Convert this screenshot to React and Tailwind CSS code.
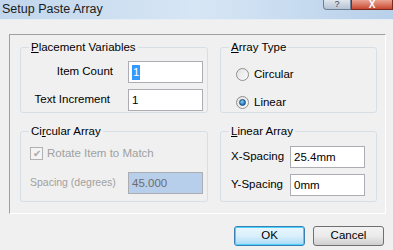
import React from "react";

const font = { fontFamily: '"Liberation Sans", Arial, sans-serif' };

function GroupBox({ label, accel, rest, className, children }) {
  return (
    <div className={`relative rounded-[3px] border border-[#d5dfe5] ${className}`}>
      <div className="absolute -top-[8px] left-[8px] bg-[#f0f0f0] px-[2px] text-[11.5px] leading-[15px] text-black">
        {label}
        <span className="underline">{accel}</span>
        {rest}
      </div>
      {children}
    </div>
  );
}

function TextBox({ value, selected, disabled }) {
  return (
    <div
      className={`flex h-[22px] w-[75px] items-center border border-[#abadb3] px-[3px] text-[11.5px] ${
        disabled ? "bg-[#b7cfea] text-[#6d6d6d]" : "bg-white text-black"
      }`}
    >
      {selected ? (
        <span className="bg-[#3399ff] px-[1px] leading-[15px] text-white">{value}</span>
      ) : (
        <span className="leading-[15px]">{value}</span>
      )}
    </div>
  );
}

function Radio({ checked, label }) {
  return (
    <div className="flex h-[14px] items-center gap-[5px] text-[11.5px] leading-[14px]">
      <span className="flex h-[13px] w-[13px] items-center justify-center rounded-full border border-[#8e8f8f] bg-gradient-to-br from-[#e2e2e2] to-[#fbfbfb]">
        {checked && (
          <span className="h-[7px] w-[7px] rounded-full border border-[#1d4f79] bg-[radial-gradient(circle_at_40%_35%,#8ed0f5,#1a73b8_70%)]" />
        )}
      </span>
      {label}
    </div>
  );
}

export default function App() {
  return (
    <div className="flex h-[250px] w-[393px] flex-col overflow-hidden bg-[#f0f0f0]" style={font}>
      {/* Title bar */}
      <div className="flex h-[19px] items-start justify-between bg-gradient-to-r from-[#c1d6ec] via-[#d7e6f5] to-[#b8d0ea]">
        <span className="pl-[2px] pt-[2px] text-[12.5px] leading-[15px] text-[#1b1b1b]">Setup Paste Array</span>
        <div className="flex">
          <div className="flex h-[10px] w-[28px] items-end justify-center rounded-bl-[4px] border border-t-0 border-[#6d7f95] bg-gradient-to-b from-[#dfe6ee] to-[#b6c3d3] text-[9px] leading-[9px] text-[#3e4a5a]">
            ?
          </div>
          <div className="flex h-[10px] w-[42px] items-end justify-center border border-t-0 border-[#7a2a20] bg-gradient-to-b from-[#e8a493] to-[#c7452e] text-[10px] font-bold leading-[9px] text-white">
            X
          </div>
        </div>
      </div>
      <div className="h-[1px] bg-[#e4ecf4]" />

      {/* Main panel */}
      <div className="ml-[9px] mt-[14px] h-[180px] w-[377px] border border-[#a0a0a0] border-b-white border-r-white">
        <div className="grid grid-cols-[188px_157px] gap-x-[12px] gap-y-[18px] pl-[10px] pt-[12px]">
          <GroupBox accel="P" rest="lacement  Variables" className="h-[66px]">
            <div className="flex flex-col gap-[6px] pt-[13px]">
              <div className="flex items-center text-[11.5px]">
                <span className="w-[107px] pr-[15px] text-right">Item Count</span>
                <TextBox value="1" selected />
              </div>
              <div className="flex items-center text-[11.5px]">
                <span className="w-[107px] pr-[18px] text-right">Text Increment</span>
                <TextBox value="1" />
              </div>
            </div>
          </GroupBox>

          <GroupBox accel="A" rest="rray Type" className="h-[66px]">
            <div className="flex flex-col gap-[14px] pl-[15px] pt-[19px]">
              <Radio label="Circular" />
              <Radio label="Linear" checked />
            </div>
          </GroupBox>

          <GroupBox label="Ci" accel="r" rest="cular Array" className="h-[71px]">
            <div className="flex flex-col gap-[10px] pl-[9px] pt-[13px] text-[11.5px] text-[#a0a0a0]">
              <div className="flex items-center gap-[4px]">
                <span className="flex h-[13px] w-[13px] items-center justify-center border border-[#b1b1b1] bg-[#f4f4f4] text-[10px] leading-[10px] text-[#a9a9a9]">
                  ✔
                </span>
                Rotate Item to Match
              </div>
              <div className="flex items-center">
                <span className="w-[98px] whitespace-nowrap text-[10.5px]">Spacing (degrees)</span>
                <TextBox value="45.000" disabled />
              </div>
            </div>
          </GroupBox>

          <GroupBox accel="L" rest="inear Array" className="h-[71px]">
            <div className="flex flex-col gap-[6px] pl-[10px] pt-[14px] text-[11.5px]">
              <div className="flex items-center">
                <span className="w-[59px]">X-Spacing</span>
                <TextBox value="25.4mm" />
              </div>
              <div className="flex items-center">
                <span className="w-[59px]">Y-Spacing</span>
                <TextBox value="0mm" />
              </div>
            </div>
          </GroupBox>
        </div>
      </div>

      {/* Buttons */}
      <div className="mt-[12px] flex justify-end gap-[8px] pr-[9px]">
        <button className="h-[20px] w-[71px] rounded-[3px] border border-[#3c7fb1] bg-gradient-to-b from-[#eaf6fd] via-[#d9f0fc] to-[#a7d9f5] text-[11.5px] shadow-[inset_0_0_0_1px_#48d2ff]">
          OK
        </button>
        <button className="h-[20px] w-[71px] rounded-[3px] border border-[#707070] bg-gradient-to-b from-[#f2f2f2] via-[#ebebeb] to-[#cfcfcf] text-[11.5px]">
          Cancel
        </button>
      </div>
    </div>
  );
}
